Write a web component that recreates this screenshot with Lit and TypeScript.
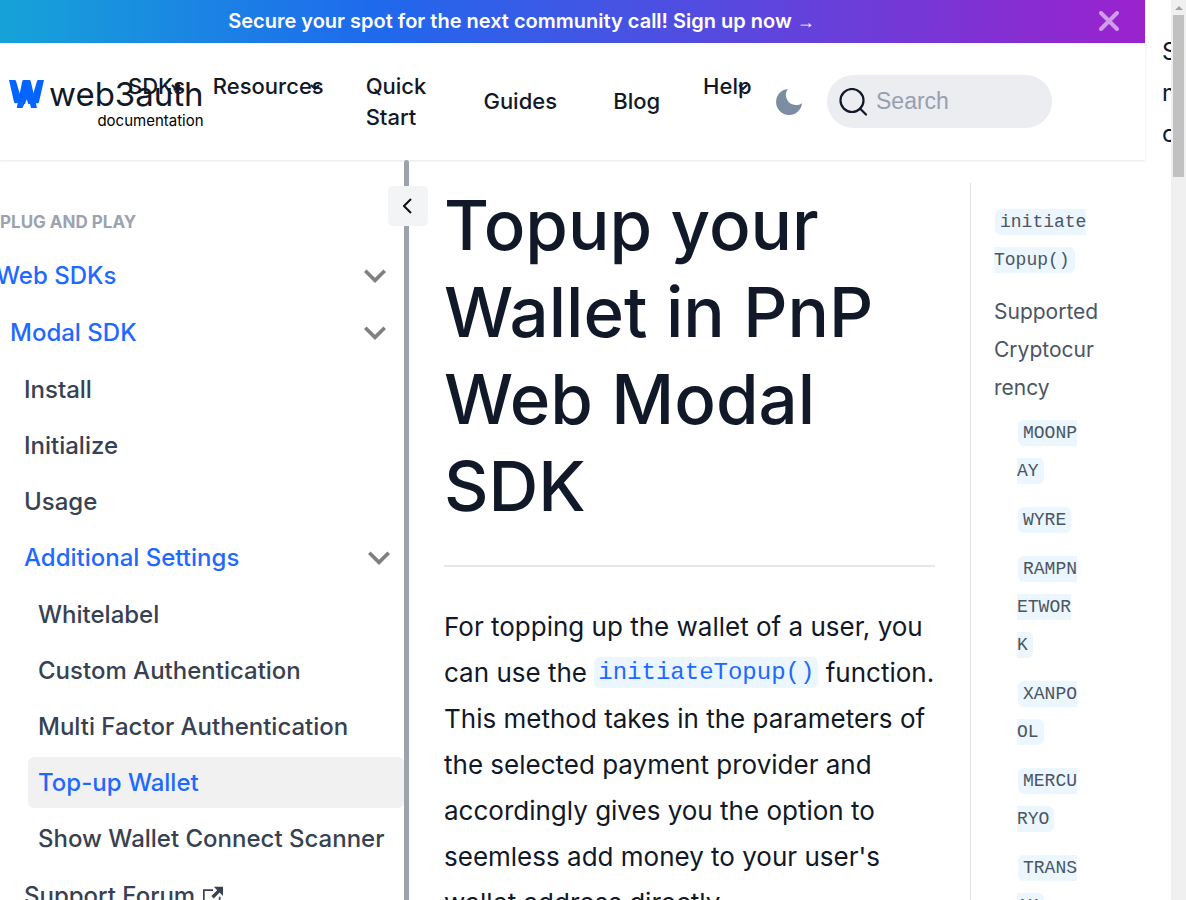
import { LitElement, html, css, nothing } from "lit";
import { customElement } from "lit/decorators.js";

interface MenuItem {
  label: string;
  active?: boolean;
  current?: boolean;
  external?: boolean;
  children?: MenuItem[];
}

const menu: MenuItem[] = [
  {
    label: "Web SDKs",
    active: true,
    children: [
      {
        label: "Modal SDK",
        active: true,
        children: [
          { label: "Install" },
          { label: "Initialize" },
          { label: "Usage" },
          {
            label: "Additional Settings",
            active: true,
            children: [
              { label: "Whitelabel" },
              { label: "Custom Authentication" },
              { label: "Multi Factor Authentication" },
              { label: "Top-up Wallet", active: true, current: true },
              { label: "Show Wallet Connect Scanner" },
            ],
          },
          { label: "Support Forum", external: true },
        ],
      },
    ],
  },
];

const providers = ["MOONPAY", "WYRE", "RAMPNETWORK", "XANPOOL", "MERCURYO", "TRANSAK"];

@customElement("app-root")
export class AppRoot extends LitElement {
  static styles = css`
    :host {
      display: grid;
      grid-template-columns: minmax(0, 1fr) 26px 15px;
      height: 100vh;
      overflow: hidden;
      background: #fff;
      color: #111827;
      font-family: Inter, "Liberation Sans", sans-serif;
      font-size: 24px;
    }
    * {
      box-sizing: border-box;
    }
    a {
      color: inherit;
      text-decoration: none;
    }
    ul {
      list-style: none;
      margin: 0;
      padding: 0;
    }
    button {
      display: grid;
      place-items: center;
      flex: none;
      border: 0;
      padding: 0;
      background: none;
      color: inherit;
      cursor: pointer;
    }
    svg {
      display: block;
      flex: none;
    }
    code {
      font-family: "Liberation Mono", monospace;
      background: #ebf6ff;
      border-radius: 6px;
    }

    .page {
      display: flex;
      flex-direction: column;
      min-width: 0;
      min-height: 0;
    }

    .banner {
      display: flex;
      align-items: center;
      flex: none;
      height: 43px;
      padding: 0 26px 1px 0;
      background: linear-gradient(90deg, #16a3d8 0%, #1f69ed 33%, #9b22cd 100%);
      color: #fff;
      font-size: 20px;
      font-weight: 600;
    }
    .banner a {
      flex: 1;
      padding-right: 56px;
      text-align: center;
    }
    .arrow {
      font-family: "Liberation Sans", sans-serif;
      font-size: 18px;
    }
    .close {
      color: rgba(255, 255, 255, 0.55);
    }

    .navbar {
      display: flex;
      align-items: center;
      flex: none;
      height: 117px;
      padding: 0 93px 0 9px;
      box-shadow: 0 1px 2px rgba(0, 0, 0, 0.1);
      font-size: 22px;
      line-height: 31px;
      font-weight: 500;
    }
    .brand {
      display: grid;
      grid-template-columns: 40px max-content;
      align-items: center;
      flex: none;
      width: 119px;
      padding-top: 2px;
      font-weight: 400;
    }
    .wordmark {
      font-size: 33px;
      line-height: 36px;
    }
    .sub {
      grid-column: 2;
      justify-self: end;
      font-size: 15px;
      line-height: 18px;
      color: #000;
    }
    .links {
      display: grid;
      flex: 1;
      grid-template-columns: 85fr 153fr 118fr 130fr 90fr 73fr;
      align-items: center;
    }
    .links a {
      max-width: 90px;
    }
    .drop {
      display: grid;
      justify-content: start;
      min-height: 62px;
    }
    .drop > * {
      grid-area: 1 / 1;
    }
    .drop svg {
      justify-self: end;
      margin: 13px 4px 0 0;
    }
    .theme {
      color: #7c8da3;
    }
    .search {
      display: flex;
      align-items: center;
      gap: 9px;
      width: 225px;
      height: 53px;
      margin-left: 25px;
      padding: 0 12px;
      border-radius: 27px;
      background: #ebedf0;
    }
    .search input {
      flex: 1;
      min-width: 0;
      border: 0;
      padding: 0;
      outline: 0;
      background: none;
      font: 23px "Liberation Sans", sans-serif;
    }
    .search input::placeholder {
      color: #969faf;
      opacity: 1;
    }

    .body {
      display: flex;
      flex: 1;
      min-height: 0;
      position: relative;
      overflow: hidden;
    }
    .sidebar {
      flex: none;
      width: 404px;
      padding-top: 50px;
      overflow: hidden;
      color: #374151;
      font-weight: 500;
    }
    .label {
      margin: 0 0 16px;
      font-size: 17px;
      line-height: 24px;
      font-weight: 700;
      color: #9ca3af;
    }
    .tree,
    .tree ul,
    .tree li {
      display: flex;
      flex-direction: column;
      gap: 5px;
    }
    .tree {
      margin-left: -14px;
    }
    .tree ul {
      margin: 1px 0;
      padding-left: 14px;
    }
    .row {
      display: flex;
      align-items: center;
      gap: 8px;
      height: 51px;
      padding: 0 14px 0 10px;
      border-radius: 6px;
      white-space: nowrap;
    }
    .tree > li > .row,
    .tree > li > ul > li > .row {
      padding-right: 18px;
    }
    .fold {
      margin-left: auto;
      color: #808080;
    }
    .active {
      color: #1f69ff;
    }
    .current {
      background: #f1f1f1;
    }
    .divider {
      flex: none;
      width: 5px;
      border-radius: 3px 3px 0 0;
      background: #9ca3af;
    }
    .collapse {
      position: absolute;
      top: 26px;
      left: 388px;
      width: 40px;
      height: 40px;
      border-radius: 5px;
      background: #f3f4f6;
    }

    main {
      flex: 1;
      min-width: 0;
      padding: 22px 35px 0;
    }
    h1 {
      margin: 0;
      padding-bottom: 35px;
      border-bottom: 2px solid #e5e7eb;
      font-size: 69px;
      line-height: 87px;
      font-weight: 500;
    }
    main p {
      margin: 37px 0 0;
      font-size: 26px;
      line-height: 46px;
    }
    main code {
      padding: 2px 4px;
      font-size: 24px;
      line-height: 24px;
      vertical-align: 3px;
      color: #1f69ff;
    }

    .toc {
      flex: none;
      width: 175px;
      margin-top: 23px;
      padding: 20px 46px 0 23px;
      border-left: 1px solid #dfe1e5;
      color: #4b5563;
      font-size: 21px;
      line-height: 38px;
      overflow: hidden;
      overflow-wrap: anywhere;
    }
    .toc ul {
      display: flex;
      flex-direction: column;
      gap: 14px;
    }
    .toc ul ul {
      gap: 11px;
      margin-top: 7px;
      padding: 0 19px 0 23px;
    }
    .toc code {
      margin-left: 1px;
      padding: 3px 5px;
      font-size: 18px;
      line-height: 18px;
      vertical-align: 2px;
    }

    .skip {
      overflow: hidden;
      padding: 31px 0 0 17px;
    }
    .skip a {
      display: block;
      width: 90px;
      line-height: 41px;
    }
    .scrollbar {
      display: flex;
      flex-direction: column;
      align-items: center;
      gap: 5px;
      padding-top: 6px;
      background: #f0f0f0;
    }
    .thumb {
      width: 11px;
      height: 162px;
      background: #c1c1c1;
    }
  `;

  private caret() {
    return html`<svg width="10" height="6" viewBox="0 0 10 6" fill="none" stroke="#111827" stroke-width="2">
      <path d="M1 1l4 4 4-4" />
    </svg>`;
  }

  private item(entry: MenuItem): unknown {
    return html`<li>
      <a
        href="#"
        class="row ${entry.active ? "active" : ""} ${entry.current ? "current" : ""}"
        aria-current=${entry.current ? "page" : nothing}
      >
        <span>${entry.label}</span>
        ${entry.external
          ? html`<svg width="20" height="20" viewBox="0 0 24 24" fill="currentColor">
              <path
                d="M21 13v10h-21v-19h12v2h-10v15h17v-8h2zm3-12h-10.988l4.035 4-6.977 7.07 2.828 2.828 6.977-7.07 4.125 4.172v-11z"
              />
            </svg>`
          : nothing}
        ${entry.children
          ? html`<svg class="fold" width="22" height="14" viewBox="6 8.4 12 7.6" fill="currentColor">
              <path d="M7.41 8.59 12 13.17l4.59-4.58L18 10l-6 6-6-6z" />
            </svg>`
          : nothing}
      </a>
      ${entry.children ? html`<ul>${entry.children.map((c) => this.item(c))}</ul>` : nothing}
    </li>`;
  }

  render() {
    return html`
      <div class="page">
        <div class="banner">
          <a href="#">Secure your spot for the next community call! Sign up now <span class="arrow">→</span></a>
          <button class="close" aria-label="Close">
            <svg width="20" height="20" viewBox="0 0 20 20" fill="none" stroke="currentColor" stroke-width="4" stroke-linecap="round">
              <path d="M2 2l16 16M18 2L2 18" />
            </svg>
          </button>
        </div>

        <nav class="navbar" aria-label="Main">
          <a class="brand" href="#">
            <svg width="35" height="28" viewBox="0 0 105 84" fill="#0364ff">
              <path d="M0 0H17Q20 0 21 3L35 50L28 66Q26 70 22 70H19Q16 70 15 66Z" />
              <path d="M105 0H88Q85 0 84 3L70 50L77 66Q79 70 83 70H86Q89 70 90 66Z" />
              <path d="M44 0H61Q64 0 65 3L84 84H66L63 72H46L40 84H23L40 3Q41 0 44 0ZM53 58L48 72H58Z" fill-rule="evenodd" />
            </svg>
            <span class="wordmark">web3auth</span>
            <span class="sub">documentation</span>
          </a>
          <div class="links">
            <a class="drop" href="#"><span>SDKs</span>${this.caret()}</a>
            <a class="drop" href="#"><span>Resources</span>${this.caret()}</a>
            <a href="#">Quick Start</a>
            <a href="#">Guides</a>
            <a href="#">Blog</a>
            <a class="drop" href="#"><span>Help</span>${this.caret()}</a>
          </div>
          <button class="theme" aria-label="Switch to dark mode">
            <svg width="26" height="26" viewBox="3 3 18 18" fill="currentColor">
              <path d="M21 12.79A9 9 0 1 1 11.21 3 7 7 0 0 0 21 12.79z" />
            </svg>
          </button>
          <label class="search">
            <svg width="28" height="28" viewBox="0 0 28 28" fill="none" stroke="#111827" stroke-width="2.2" stroke-linecap="round">
              <circle cx="13" cy="12.5" r="11.5" />
              <path d="M21 20.5l6 6" />
            </svg>
            <input type="search" placeholder="Search" aria-label="Search" />
          </label>
        </nav>

        <div class="body">
          <aside class="sidebar">
            <p class="label">PLUG AND PLAY</p>
            <ul class="tree">${menu.map((m) => this.item(m))}</ul>
          </aside>
          <div class="divider"></div>
          <button class="collapse" aria-label="Collapse sidebar">
            <svg width="10" height="16" viewBox="1 0 10 16" fill="none" stroke="#111" stroke-width="2">
              <path d="M9 1L2 8l7 7" />
            </svg>
          </button>

          <main>
            <h1>Topup your Wallet in PnP Web Modal SDK</h1>
            <p>
              For topping up the wallet of a user, you can use the <code>initiateTopup()</code> function. This method
              takes in the parameters of the selected payment provider and accordingly gives you the option to seemless
              add money to your user's wallet address directly.
            </p>
          </main>

          <nav class="toc" aria-label="On this page">
            <ul>
              <li><a href="#"><code>initiate<wbr />Topup()</code></a></li>
              <li>
                <a href="#">Supported Cryptocurrency</a>
                <ul>
                  ${providers.map((p) => html`<li><a href="#"><code>${p}</code></a></li>`)}
                </ul>
              </li>
            </ul>
          </nav>
        </div>
      </div>

      <div class="skip"><a href="#">Skip to main content</a></div>
      <div class="scrollbar" aria-hidden="true">
        <svg width="8" height="4" viewBox="0 0 8 4" fill="#a3a3a3"><path d="M0 4l4-4 4 4z" /></svg>
        <div class="thumb"></div>
      </div>
    `;
  }
}
